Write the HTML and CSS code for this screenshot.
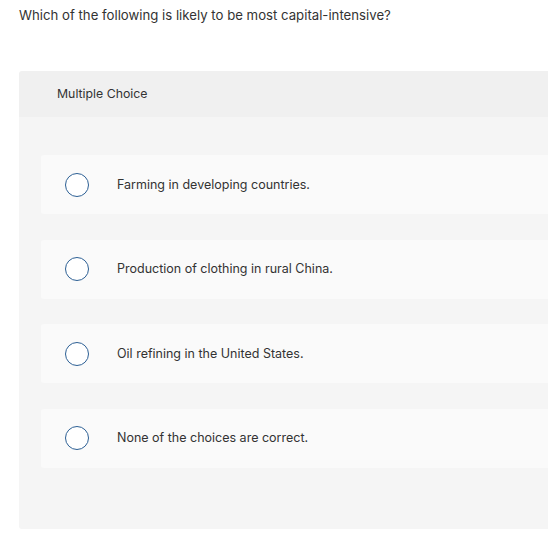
FILE: index.html
```html
<!DOCTYPE html>
<html>
<head>
<meta charset="utf-8">
<link rel="stylesheet" href="styles.css">
</head>
<body>
<div class="page">
  <p class="question">Which of the following is likely to be most capital-intensive?</p>
  <div class="card">
    <div class="card-header">Multiple Choice</div>
    <div class="card-body">
      <div class="option">
        <span class="radio"></span>
        <span class="label">Farming in developing countries.</span>
      </div>
      <div class="option">
        <span class="radio"></span>
        <span class="label">Production of clothing in rural China.</span>
      </div>
      <div class="option">
        <span class="radio"></span>
        <span class="label">Oil refining in the United States.</span>
      </div>
      <div class="option">
        <span class="radio"></span>
        <span class="label">None of the choices are correct.</span>
      </div>
    </div>
  </div>
</div>
</body>
</html>
```

FILE: styles.css
```css
html, body {
  margin: 0;
  padding: 0;
  background: #ffffff;
}
body {
  font-family: Inter, "Open Sans", Arial, sans-serif;
  color: #333333;
}
.page {
  padding: 0 0 0 19px;
}
.question {
  margin: 0;
  padding-top: 6px;
  height: 65px;
  font-size: 13.2px;
  line-height: 18px;
  color: #333333;
}
.card {
  border-radius: 3px 0 0 3px;
  overflow: hidden;
}
.card-header {
  background: #f0f0f0;
  height: 46px;
  padding-left: 38px;
  display: flex;
  align-items: center;
  font-size: 12.3px;
  color: #333333;
  padding-bottom: 1px;
  box-sizing: border-box;
}
.card-body {
  background: #f5f5f5;
  padding: 38px 0 61.5px 22px;
  display: flex;
  flex-direction: column;
  gap: 25.5px;
}
.option {
  background: #fafafa;
  height: 59px;
  border-radius: 3px 0 0 3px;
  display: flex;
  align-items: center;
  padding-left: 24px;
}
.radio {
  width: 22px;
  height: 22px;
  border: 1.5px solid #2c5f94;
  border-radius: 50%;
  background: #ffffff;
  flex: none;
}
.label {
  margin-left: 28px;
  font-size: 12.5px;
  color: #333333;
  padding-bottom: 1px;
}
```
